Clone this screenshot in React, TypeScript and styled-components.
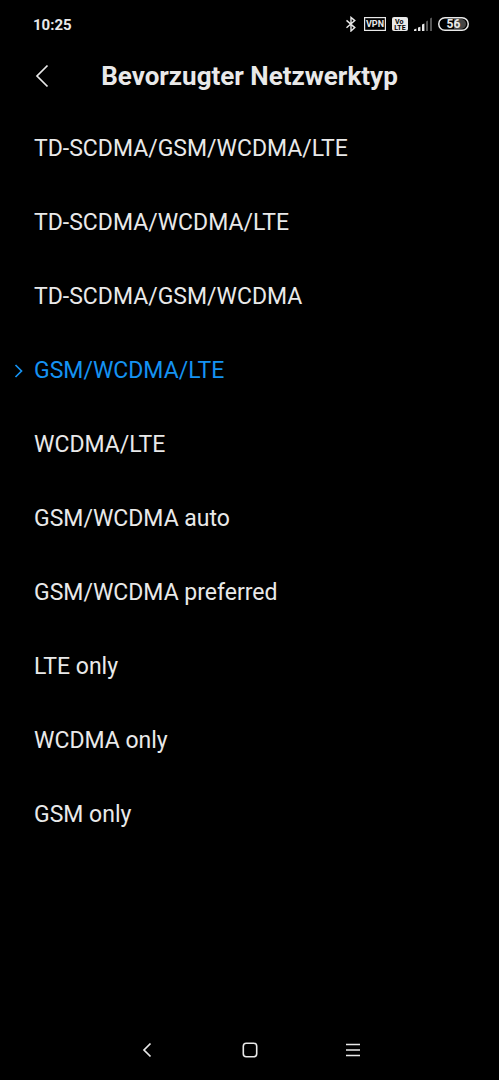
import React, { useState } from 'react';
import styled, { createGlobalStyle } from 'styled-components';

const GlobalStyle = createGlobalStyle`
  * { box-sizing: border-box; }
  body {
    margin: 0;
    background: #000;
    color: #e9e9e9;
    font-family: Roboto, "Liberation Sans", sans-serif;
  }
`;

const Screen = styled.div`
  display: flex;
  flex-direction: column;
  min-height: 100vh;
`;

const StatusBar = styled.div`
  display: flex;
  align-items: center;
  justify-content: space-between;
  height: 48px;
  padding: 0 30px 0 33px;
`;

const Clock = styled.time`
  padding-top: 2px;
  font-size: 15px;
  line-height: 20px;
  font-weight: 700;
`;

const StatusIcons = styled.div`
  display: flex;
  align-items: center;
  gap: 6px;
  svg { display: block; }
`;

const Header = styled.header`
  display: grid;
  grid-template-columns: 68px 1fr 68px;
  align-items: center;
  height: 56px;
  margin-bottom: 8px;
`;

const Title = styled.h1`
  margin: 0;
  font-size: 26px;
  line-height: 32px;
  font-weight: 700;
  text-align: center;
  white-space: nowrap;
`;

const IconButton = styled.button`
  display: flex;
  align-items: center;
  justify-content: center;
  width: 48px;
  height: 48px;
  padding: 0;
  border: 0;
  background: none;
  color: inherit;
  cursor: pointer;
`;

const BackButton = styled(IconButton)`
  margin-left: 18px;
`;

const Options = styled.fieldset`
  flex: 1;
  min-width: 0;
  margin: 0;
  padding: 0;
  border: 0;
`;

const Option = styled.label<{ $selected: boolean }>`
  display: flex;
  align-items: center;
  height: 74px;
  color: ${(p) => (p.$selected ? '#1592f2' : 'inherit')};
  font-size: 23px;
  line-height: 32px;
  cursor: pointer;
`;

const Radio = styled.input`
  appearance: none;
  width: 0;
  height: 0;
  margin: 0;
`;

const Marker = styled.span`
  display: flex;
  justify-content: flex-end;
  width: 34px;
  padding-right: 10px;
`;

const NavBar = styled.nav`
  display: flex;
  justify-content: center;
  align-items: center;
  gap: 55px;
  height: 60px;
`;

const BluetoothIcon = () => (
  <svg width="13" height="16" viewBox="0 0 13 16" fill="none" stroke="currentColor" strokeWidth="1.4">
    <path d="M1.5 4.4 9.8 11.6 6 15V1.4l3.8 3.2-8.3 7.2" />
  </svg>
);

const VpnIcon = () => (
  <svg width="22" height="14" viewBox="0 0 22 14" role="img" aria-label="VPN">
    <rect x="0.6" y="0.6" width="20.8" height="12.8" fill="none" stroke="currentColor" strokeWidth="1.2" />
    <text x="11" y="10.3" textAnchor="middle" fontSize="9" fontWeight="700" fill="currentColor">VPN</text>
  </svg>
);

const VolteIcon = () => (
  <svg width="16" height="14" viewBox="0 0 16 14" role="img" aria-label="VoLTE">
    <rect width="16" height="14" rx="2" fill="currentColor" />
    <text x="3" y="6.6" fontSize="7" fontWeight="700" fill="#000">Vo</text>
    <text x="8" y="12.8" textAnchor="middle" fontSize="7" fontWeight="700" fill="#000">LTE</text>
  </svg>
);

const SignalIcon = () => (
  <svg width="18" height="14" viewBox="0 0 18 14" fill="currentColor">
    <path d="M0 12.4 2.4 11.6V14H0Z" />
    <path d="M4 10.6 6.4 9.8V14H4Z" />
    <path d="M8 7.6 10.4 6.6V14H8Z" />
    <path d="M12 4.4 14 3.4V14h-2Z" fill="#555" />
    <path d="M16 1.4 18 .4V14h-2Z" fill="#555" />
  </svg>
);

const BatteryIcon = () => (
  <svg width="31" height="14" viewBox="0 0 31 14" role="img" aria-label="56 %">
    <path d="M16 2h7a5 5 0 0 1 0 10h-7Z" fill="#444" />
    <rect x="0.75" y="0.75" width="29.5" height="12.5" rx="6.25" fill="none" stroke="currentColor" strokeWidth="1.5" />
    <text x="15.5" y="11.3" textAnchor="middle" fontSize="12" fontWeight="700" fill="currentColor">56</text>
  </svg>
);

const types = [
  'TD-SCDMA/GSM/WCDMA/LTE',
  'TD-SCDMA/WCDMA/LTE',
  'TD-SCDMA/GSM/WCDMA',
  'GSM/WCDMA/LTE',
  'WCDMA/LTE',
  'GSM/WCDMA auto',
  'GSM/WCDMA preferred',
  'LTE only',
  'WCDMA only',
  'GSM only',
];

export default function App() {
  const [selected, setSelected] = useState('GSM/WCDMA/LTE');
  return (
    <Screen>
      <GlobalStyle />
      <StatusBar>
        <Clock>10:25</Clock>
        <StatusIcons>
          <BluetoothIcon />
          <VpnIcon />
          <VolteIcon />
          <SignalIcon />
          <BatteryIcon />
        </StatusIcons>
      </StatusBar>
      <Header>
        <BackButton type="button" aria-label="Zurück">
          <svg width="14" height="24" viewBox="0 0 14 24" fill="none" stroke="currentColor" strokeWidth="1.7">
            <path d="M12.5 1.5 2 12l10.5 10.5" />
          </svg>
        </BackButton>
        <Title>Bevorzugter Netzwerktyp</Title>
      </Header>
      <Options aria-label="Bevorzugter Netzwerktyp">
        {types.map((type) => (
          <Option key={type} $selected={type === selected}>
            <Radio type="radio" name="network" checked={type === selected} onChange={() => setSelected(type)} />
            <Marker>
              {type === selected && (
                <svg width="10" height="14" viewBox="0 0 10 14" fill="none" stroke="currentColor" strokeWidth="1.7">
                  <path d="M1.5 1 7.5 7l-6 6" />
                </svg>
              )}
            </Marker>
            {type}
          </Option>
        ))}
      </Options>
      <NavBar>
        <IconButton type="button" aria-label="Zurück">
          <svg width="10" height="16" viewBox="0 0 10 16" fill="none" stroke="currentColor" strokeWidth="1.7">
            <path d="M8.5 1.5 2 8l6.5 6.5" />
          </svg>
        </IconButton>
        <IconButton type="button" aria-label="Startseite">
          <svg width="16" height="16" viewBox="0 0 16 16" fill="none" stroke="currentColor" strokeWidth="1.6">
            <rect x="1.3" y="1.3" width="13.4" height="13.4" rx="3" />
          </svg>
        </IconButton>
        <IconButton type="button" aria-label="Letzte Apps">
          <svg width="14" height="14" viewBox="0 0 14 14" fill="none" stroke="currentColor" strokeWidth="1.5">
            <path d="M0 1.5h14M0 7h14M0 12.5h14" />
          </svg>
        </IconButton>
      </NavBar>
    </Screen>
  );
}
